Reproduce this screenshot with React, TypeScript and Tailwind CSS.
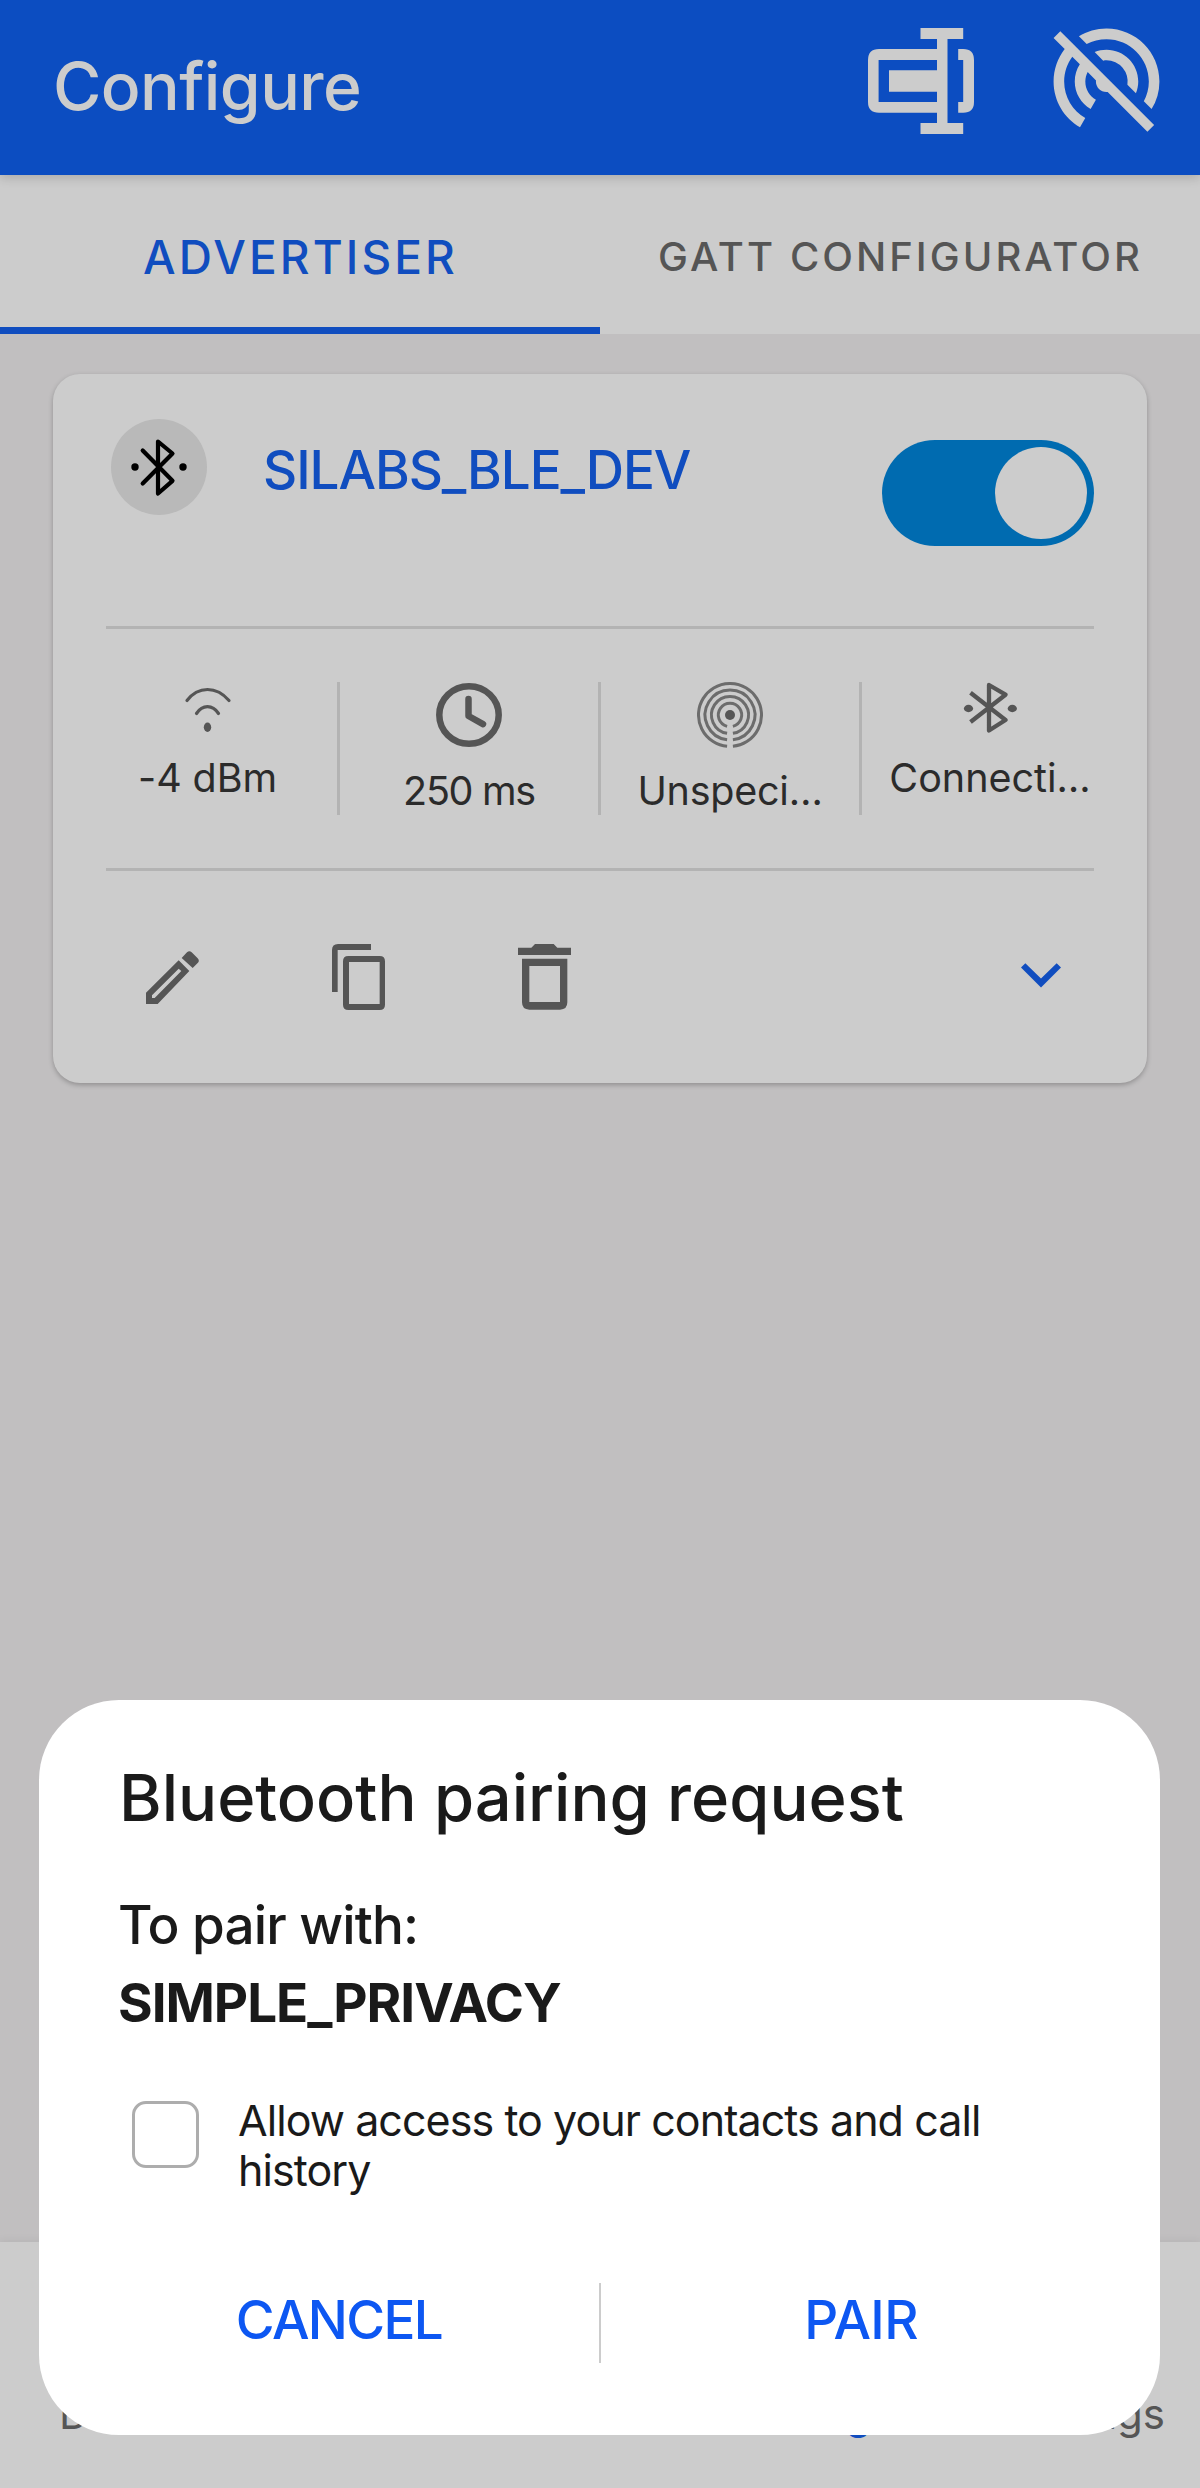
import type { ReactNode } from "react"
import { MdPortableWifiOff } from "react-icons/md"

function RenameIcon() {
  return (
    <svg className="h-[106px] w-[106px]" viewBox="868 28 106 106" fill="#cccccc">
      <path d="M879 49H937V39H920.5V28H963.2V39H947.5V123H963.2V134H920.5V123H937V112.7H879Q868 112.7 868 102V60Q868 49 879 49ZM878.6 60V102H937V91.7H889V70.3H937V60Z" fillRule="evenodd" />
      <path d="M958.2 49H963.2Q974 49 974 60V102Q974 112.7 963.2 112.7H958.2V102H963.2V60H958.2Z" />
    </svg>
  )
}

function BluetoothBadge() {
  return (
    <div className="flex h-24 w-24 items-center justify-center rounded-full bg-[#b9b9b9]">
      <svg className="h-24 w-24" viewBox="111 419 96 96" fill="none" stroke="#000" strokeWidth="4.2" strokeLinecap="round" strokeLinejoin="round">
        <path d="M142.7 450.5L172.500 480.8L158 493.500V441.500L172.500 453.5L142.7 483.5" />
        <circle cx="135" cy="467" r="3.7" fill="#000" stroke="none" />
        <circle cx="183" cy="467" r="3.7" fill="#000" stroke="none" />
      </svg>
    </div>
  )
}

function SignalIcon() {
  return (
    <svg className="h-[51px] w-[52px] shrink-0" viewBox="182 682 52 51" fill="none" stroke="#555" strokeWidth="3.2" strokeLinecap="round">
      <path d="M187 700.5Q195.500 689.500 207.500 689.500T229 700.500" />
      <path d="M196.500 713.500Q201 706.700 207.500 706.700T218.500 713.500" />
      <ellipse cx="207.500" cy="727.300" rx="3.700" ry="4.700" fill="#555" stroke="none" />
    </svg>
  )
}

function ClockIcon() {
  return (
    <svg className="h-[66px] w-[66px] shrink-0" viewBox="436 682 66 66" fill="none" stroke="#555" strokeWidth="6.500" strokeLinecap="round">
      <ellipse cx="469" cy="715" rx="29.700" ry="28.800" />
      <path d="M468.500 699V716L483 724.200" strokeLinejoin="round" />
    </svg>
  )
}

function BeaconIcon() {
  return (
    <svg className="h-[66px] w-[66px] shrink-0" viewBox="-33 -33 66 66" fill="none" stroke="#6c6c6c" strokeWidth="3">
      <path d="M-2.900 31.360A31.500 31.500 0 1 1 2.900 31.360" />
      <path d="M-2.900 24.730A24.900 24.900 0 1 1 2.900 24.730" />
      <path d="M-2.900 18.270A18.500 18.500 0 1 1 2.900 18.270" />
      <path d="M-2.900 11.340A11.700 11.700 0 1 1 2.900 11.340" />
      <circle r="5" fill="#555" stroke="none" />
    </svg>
  )
}

function ConnectableIcon() {
  return (
    <svg className="h-[51px] w-[54px] shrink-0" viewBox="964 682 54 51" fill="none" stroke="#555" strokeWidth="4.300" strokeLinejoin="round">
      <path d="M971.500 692.700L1006.500 720L990 730.500V685L1006.500 694.700L971.500 722" />
      <ellipse cx="969.500" cy="708.500" rx="4.600" ry="3.700" fill="#555" stroke="none" />
      <ellipse cx="1013.300" cy="708.500" rx="4.600" ry="3.700" fill="#555" stroke="none" />
    </svg>
  )
}

function PencilIcon() {
  return (
    <svg className="h-[53px] w-[53px]" viewBox="168 153 159 159" fill="#555">
      <path d="M168 312V278L266 181L298 213L203 312ZM186 294H194L274 213L266 206L186 286Z" fillRule="evenodd" />
      <path d="M275 174L291 157Q298 150 305 157L323 175Q330 182 323 189L308 204Z" />
    </svg>
  )
}

function CopyIcon() {
  return (
    <svg className="h-[66px] w-[53px]" viewBox="726 132 159 198" fill="#555">
      <path d="M726 276V150Q726 132 744 132H843V150H743V276Z" />
      <path d="M775 168H869Q885 168 885 184V314Q885 330 869 330H775Q759 330 759 314V184Q759 168 775 168ZM777 186V312H869V186Z" fillRule="evenodd" />
    </svg>
  )
}

function TrashIcon() {
  return (
    <svg className="h-[66px] w-[53px]" viewBox="1284 132 159 198" fill="#555">
      <path d="M1284 143H1324L1335 132H1391L1402 143H1443V165H1284Z" />
      <path d="M1296 176H1432V307Q1432 329 1410 329H1318Q1296 329 1296 307ZM1318 198V306H1410V198Z" fillRule="evenodd" />
    </svg>
  )
}

function Stat({ icon, label, spacing }: { icon: ReactNode; label: string; spacing: string }) {
  return (
    <div className="flex h-[133px] flex-1 flex-col items-center">
      {icon}
      <span className={`mt-[20px] text-[39.500px] leading-[50px] whitespace-nowrap text-[#2b2b2b] ${spacing}`}>{label}</span>
    </div>
  )
}

function Divider() {
  return <div className="h-[133px] w-[3px] shrink-0 bg-[#b3b3b3]" />
}

export default function App() {
  return (
    <div className="relative flex h-[2488px] w-[1200px] flex-col overflow-hidden bg-[#c1bfc0] font-['Inter',sans-serif]">
      <header className="relative z-10 flex h-[175px] shrink-0 items-start justify-between bg-[#0c4dc1] pl-[53px] shadow-[0_3px_10px_rgba(0,0,0,0.16)]">
        <h1 className="mt-[46px] text-[66px] leading-[80px] font-medium tracking-[-0.6px] text-[#cccccc]">Configure</h1>
        <div className="flex items-start pr-[30px]">
          <div className="mt-[28px] mr-[69px]"><RenameIcon /></div>
          <MdPortableWifiOff className="mt-[18px] h-[127px] w-[127px] text-[#cccccc]" />
        </div>
      </header>

      <nav className="flex h-[159px] shrink-0 bg-[#cccccc]">
        <div className="flex h-full w-[600px] flex-col justify-between border-b-[7px] border-[#104dbf] pt-[52px]">
          <span className="pl-[143px] text-[46px] leading-[60px] font-medium tracking-[3.080px] text-[#104dbf]">ADVERTISER</span>
        </div>
        <div className="w-[600px] pt-[52px]">
          <span className="block pl-[58px] text-[40px] leading-[60px] font-medium tracking-[3.040px] whitespace-nowrap text-[#555]">GATT CONFIGURATOR</span>
        </div>
      </nav>

      <main className="px-[53px] pt-[40px]">
        <section className="h-[709px] rounded-[27px] bg-[#cccccc] px-[53px] shadow-[0_2px_5px_rgba(0,0,0,0.25)]">
          <div className="flex h-[252px] items-start pt-[45px] pl-[5px]">
            <BluetoothBadge />
            <h2 className="mt-[20px] ml-[56px] text-[53px] leading-[62px] font-medium tracking-[-1.080px] text-[#104dbf]">SILABS_BLE_DEV</h2>
            <div className="mt-[21px] ml-auto flex h-[106px] w-[212px] items-center justify-end rounded-full bg-[#006bb0] pr-[7px]">
              <div className="h-[92px] w-[92px] rounded-full bg-[#cccccc]" />
            </div>
          </div>
          <div className="flex h-[245px] items-start border-y-[3px] border-[#b3b3b3] pt-[53px]">
            <div className="w-[231px] pr-[28px]"><Stat icon={<SignalIcon />} label="-4 dBm" spacing="tracking-[-0.100px]" /></div>
            <Divider />
            <div className="w-[258px]"><Stat icon={<ClockIcon />} label="250 ms" spacing="-translate-y-[2px] tracking-[-1.300px]" /></div>
            <Divider />
            <div className="w-[258px]"><Stat icon={<BeaconIcon />} label="Unspeci…" spacing="-translate-y-[2px] tracking-[-0.250px]" /></div>
            <Divider />
            <div className="w-[232px] pl-[24px]"><Stat icon={<ConnectableIcon />} label="Connecti…" spacing="tracking-normal" /></div>
          </div>
          <div className="flex items-start pt-[73px]">
            <div className="mt-[7px] ml-[40px]"><PencilIcon /></div>
            <div className="ml-[133px]"><CopyIcon /></div>
            <div className="ml-[133px]"><TrashIcon /></div>
            <svg className="mt-[19px] mr-[33px] ml-auto h-[25px] w-[40px]" viewBox="363 190 120 74" fill="#104dbf">
              <path d="M363 203L376 190L423 236L470 190L483 203L423 263Z" />
            </svg>
          </div>
        </section>
      </main>

      <footer className="mt-auto flex h-[246px] shrink-0 items-start bg-[#cccccc] pt-[146px] text-[42px] leading-[52px] text-[#555] shadow-[0_-2px_8px_rgba(0,0,0,0.05)]">
        <span className="w-[241px] shrink-0 pr-[6px] text-center">Demo</span>
        <span className="w-[241px] shrink-0 text-center">Scan</span>
        <span className="w-[241px] shrink-0 text-center">Test</span>
        <span className="w-[241px] shrink-0 pr-[12px] text-center text-[#104dbf]">Configure</span>
        <span className="w-[241px] shrink-0 text-center">Settings</span>
      </footer>

      <div role="dialog" className="absolute top-[1700px] left-[39px] z-20 h-[735px] w-[1121px] rounded-[80px] bg-white text-[#1a1a1a]">
        <h2 className="pt-[58px] pl-[80px] text-[65px] leading-[80px] font-medium">Bluetooth pairing request</h2>
        <p className="mt-[48px] pl-[79px] text-[53px] leading-[78px] font-medium tracking-[-0.850px]">
          To pair with:
          <br />
          <strong className="font-bold tracking-[-1.030px]">SIMPLE_PRIVACY</strong>
        </p>
        <label className="mt-[53px] flex items-start pl-[93px]">
          <span className="mt-[6px] h-[67px] w-[67px] shrink-0 rounded-[14px] border-[3px] border-[#adadad]" />
          <span className="ml-[39px] w-[780px] text-[43px] leading-[50px] tracking-[-0.940px]">
            Allow access to your contacts and call
            <br />
            history
          </span>
        </label>
        <div className="mt-[88px] flex h-[80px] items-start text-[53px] leading-[74px] font-medium text-[#0d57f2]">
          <span className="w-[560px] pl-[40px] text-center tracking-[-1.640px]">CANCEL</span>
          <span className="h-full w-[2px] bg-[#cccccc]" />
          <span className="w-[558px] pr-[38px] text-center tracking-[-0.670px]">PAIR</span>
        </div>
      </div>
    </div>
  )
}
